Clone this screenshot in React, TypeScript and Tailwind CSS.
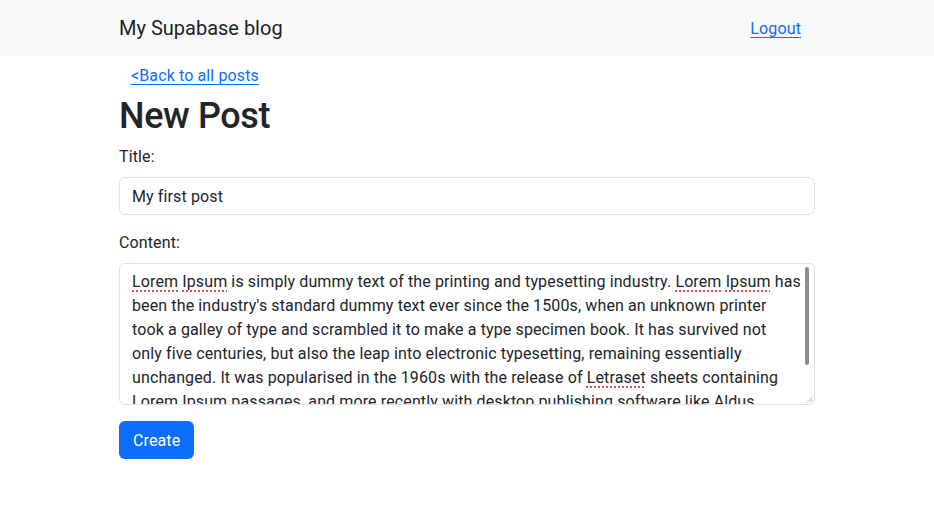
const font = { fontFamily: 'Roboto, "Liberation Sans", Arial, sans-serif' };

function Misspelled({ children }: { children: string }) {
  return (
    <span className="underline decoration-[#e5484d] decoration-dotted decoration-[1.5px] underline-offset-[3px]">
      {children}
    </span>
  );
}

export default function App() {
  return (
    <div className="min-h-[510px] bg-white text-[16px] leading-6 text-[#212529] tracking-[0.12px]" style={font}>
      <nav className="bg-[#f8f9fa] py-2">
        <div className="mx-auto flex w-[720px] items-center justify-between px-3">
          <a href="#" className="py-[5px] text-[20px] leading-[30px] tracking-normal text-[rgba(0,0,0,0.9)]">
            My Supabase blog
          </a>
          <a href="#" className="mr-[14px] pb-[7px] pt-[9px] text-[#0d6efd] underline underline-offset-[3px]">
            Logout
          </a>
        </div>
      </nav>

      <main className="mx-auto w-[720px] px-3">
        <a href="#" className="inline-block px-3 pb-[6px] pt-[8px] text-[#0d6efd] underline underline-offset-[3px]">
          &lt;Back to all posts
        </a>
        <h1 className="mb-2 pt-[2px] text-[36px] font-medium leading-[41px] tracking-[-0.4px]">New Post</h1>

        <form onSubmit={(e) => e.preventDefault()}>
          <div className="mb-4">
            <label className="mb-2 block">Title:</label>
            <input
              defaultValue="My first post"
              className="block h-[38px] w-full rounded-[6px] border border-[#dee2e6] px-3 py-[6px] outline-none"
            />
          </div>
          <div className="mb-4">
            <label className="mb-2 block">Content:</label>
            <div className="relative h-[142px] w-full overflow-hidden whitespace-nowrap rounded-[6px] border border-[#dee2e6] px-3 py-[6px]">
              <p>
                <Misspelled>Lorem</Misspelled> <Misspelled>Ipsum</Misspelled> is simply dummy text of the printing and
                typesetting industry. <Misspelled>Lorem</Misspelled> <Misspelled>Ipsum</Misspelled> has
                <br />
                been the industry's standard dummy text ever since the 1500s, when an unknown printer
                <br />
                took a galley of type and scrambled it to make a type specimen book. It has survived not
                <br />
                only five centuries, but also the leap into electronic typesetting, remaining essentially
                <br />
                unchanged. It was popularised in the 1960s with the release of <Misspelled>Letraset</Misspelled> sheets
                containing
                <br />
                Lorem Ipsum passages, and more recently with desktop publishing software like Aldus
              </p>
              <div className="absolute right-[5px] top-[3px] h-[98px] w-[4px] rounded-full bg-[#8f8f8f]" />
              <svg className="absolute bottom-[1px] right-[1px]" width="7" height="7" viewBox="0 0 7 7">
                <path d="M6.5 1 L1 6.5 M6.5 4 L4 6.5" stroke="#9a9a9a" strokeWidth="0.8" />
              </svg>
            </div>
          </div>
          <button type="submit" className="rounded-[6px] bg-[#0d6efd] px-[14px] pb-[6px] pt-[8px] text-white">
            Create
          </button>
        </form>
      </main>
    </div>
  );
}
